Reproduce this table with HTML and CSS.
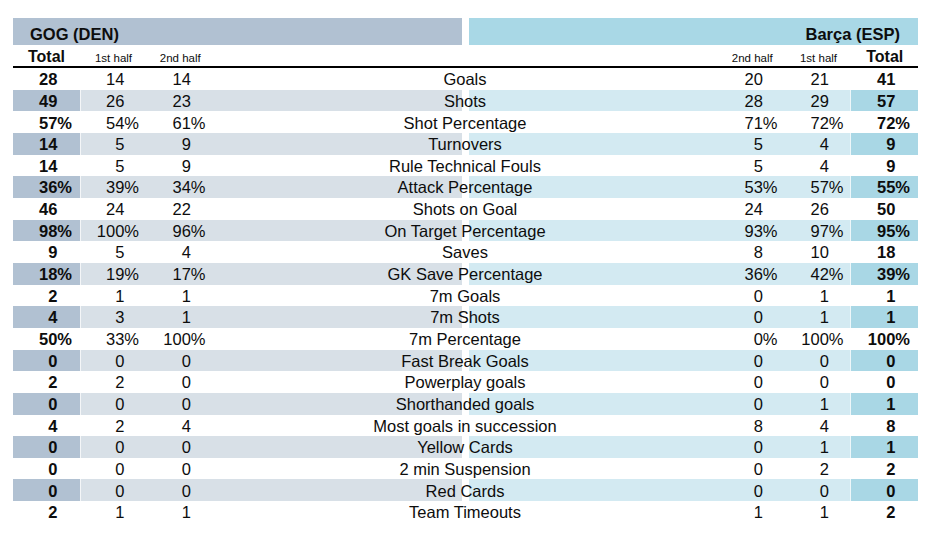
FILE: index.html
```html
<!DOCTYPE html>
<html lang="en">
<head>
<meta charset="utf-8">
<title>GOG vs Barça – Team Statistics</title>
<link rel="stylesheet" href="styles.css">
</head>
<body>
<div class="sheet">
  <div class="teams">
    <div class="team home">GOG (DEN)</div>
    <div class="team away">Barça (ESP)</div>
  </div>
  <div class="subhead">
    <div class="h total">Total</div>
    <div class="h">1st half</div>
    <div class="h">2nd half</div>
    <div class="h blank"></div>
    <div class="h">2nd half</div>
    <div class="h">1st half</div>
    <div class="h total">Total</div>
  </div>
  <div class="stats">
    <div class="row"><div class="c num b">28</div><div class="c num">14</div><div class="c num">14</div><div class="c label">Goals</div><div class="c num">20</div><div class="c num">21</div><div class="c num b">41</div></div>
    <div class="row"><div class="c num b">49</div><div class="c num">26</div><div class="c num">23</div><div class="c label">Shots</div><div class="c num">28</div><div class="c num">29</div><div class="c num b">57</div></div>
    <div class="row"><div class="c num b">57<span class="pct">%</span></div><div class="c num">54<span class="pct">%</span></div><div class="c num">61<span class="pct">%</span></div><div class="c label">Shot Percentage</div><div class="c num">71<span class="pct">%</span></div><div class="c num">72<span class="pct">%</span></div><div class="c num b">72<span class="pct">%</span></div></div>
    <div class="row"><div class="c num b">14</div><div class="c num">5</div><div class="c num">9</div><div class="c label">Turnovers</div><div class="c num">5</div><div class="c num">4</div><div class="c num b">9</div></div>
    <div class="row"><div class="c num b">14</div><div class="c num">5</div><div class="c num">9</div><div class="c label">Rule Technical Fouls</div><div class="c num">5</div><div class="c num">4</div><div class="c num b">9</div></div>
    <div class="row"><div class="c num b">36<span class="pct">%</span></div><div class="c num">39<span class="pct">%</span></div><div class="c num">34<span class="pct">%</span></div><div class="c label">Attack Percentage</div><div class="c num">53<span class="pct">%</span></div><div class="c num">57<span class="pct">%</span></div><div class="c num b">55<span class="pct">%</span></div></div>
    <div class="row"><div class="c num b">46</div><div class="c num">24</div><div class="c num">22</div><div class="c label">Shots on Goal</div><div class="c num">24</div><div class="c num">26</div><div class="c num b">50</div></div>
    <div class="row"><div class="c num b">98<span class="pct">%</span></div><div class="c num">100<span class="pct">%</span></div><div class="c num">96<span class="pct">%</span></div><div class="c label">On Target Percentage</div><div class="c num">93<span class="pct">%</span></div><div class="c num">97<span class="pct">%</span></div><div class="c num b">95<span class="pct">%</span></div></div>
    <div class="row"><div class="c num b">9</div><div class="c num">5</div><div class="c num">4</div><div class="c label">Saves</div><div class="c num">8</div><div class="c num">10</div><div class="c num b">18</div></div>
    <div class="row"><div class="c num b">18<span class="pct">%</span></div><div class="c num">19<span class="pct">%</span></div><div class="c num">17<span class="pct">%</span></div><div class="c label">GK Save Percentage</div><div class="c num">36<span class="pct">%</span></div><div class="c num">42<span class="pct">%</span></div><div class="c num b">39<span class="pct">%</span></div></div>
    <div class="row"><div class="c num b">2</div><div class="c num">1</div><div class="c num">1</div><div class="c label">7m Goals</div><div class="c num">0</div><div class="c num">1</div><div class="c num b">1</div></div>
    <div class="row"><div class="c num b">4</div><div class="c num">3</div><div class="c num">1</div><div class="c label">7m Shots</div><div class="c num">0</div><div class="c num">1</div><div class="c num b">1</div></div>
    <div class="row"><div class="c num b">50<span class="pct">%</span></div><div class="c num">33<span class="pct">%</span></div><div class="c num">100<span class="pct">%</span></div><div class="c label">7m Percentage</div><div class="c num">0<span class="pct">%</span></div><div class="c num">100<span class="pct">%</span></div><div class="c num b">100<span class="pct">%</span></div></div>
    <div class="row"><div class="c num b">0</div><div class="c num">0</div><div class="c num">0</div><div class="c label">Fast Break Goals</div><div class="c num">0</div><div class="c num">0</div><div class="c num b">0</div></div>
    <div class="row"><div class="c num b">2</div><div class="c num">2</div><div class="c num">0</div><div class="c label">Powerplay goals</div><div class="c num">0</div><div class="c num">0</div><div class="c num b">0</div></div>
    <div class="row"><div class="c num b">0</div><div class="c num">0</div><div class="c num">0</div><div class="c label">Shorthanded goals</div><div class="c num">0</div><div class="c num">1</div><div class="c num b">1</div></div>
    <div class="row"><div class="c num b">4</div><div class="c num">2</div><div class="c num">4</div><div class="c label">Most goals in succession</div><div class="c num">8</div><div class="c num">4</div><div class="c num b">8</div></div>
    <div class="row"><div class="c num b">0</div><div class="c num">0</div><div class="c num">0</div><div class="c label">Yellow Cards</div><div class="c num">0</div><div class="c num">1</div><div class="c num b">1</div></div>
    <div class="row"><div class="c num b">0</div><div class="c num">0</div><div class="c num">0</div><div class="c label">2 min Suspension</div><div class="c num">0</div><div class="c num">2</div><div class="c num b">2</div></div>
    <div class="row"><div class="c num b">0</div><div class="c num">0</div><div class="c num">0</div><div class="c label">Red Cards</div><div class="c num">0</div><div class="c num">0</div><div class="c num b">0</div></div>
    <div class="row"><div class="c num b">2</div><div class="c num">1</div><div class="c num">1</div><div class="c label">Team Timeouts</div><div class="c num">1</div><div class="c num">1</div><div class="c num b">2</div></div>
  </div>
</div>
</body>
</html>
```

FILE: styles.css
```css
html, body {
  margin: 0;
  padding: 0;
  background: #ffffff;
}

body {
  font-family: "Liberation Sans", Arial, sans-serif;
  color: #0d0d0d;
}

.sheet {
  width: 905px;
  margin: 18px 0 0 13px;
}

/* team header bars */
.teams {
  display: flex;
  gap: 7px;
  height: 27px;
}

.team {
  flex: 1;
  box-sizing: border-box;
  padding-top: 5px;
  line-height: 22px;
  font-size: 16.5px;
  font-weight: bold;
}

.home {
  background: #b1c1d2;
  padding-left: 17px;
}

.away {
  background: #a9d8e6;
  text-align: right;
  padding-right: 18px;
}

/* column grid shared by sub header and rows */
.subhead,
.row {
  display: grid;
  grid-template-columns: 67px 67px 66.5px 505.5px 66.5px 66px 66.5px;
}

.subhead {
  height: 21px;
  border-bottom: 2px solid #000;
  align-items: end;
}

.h {
  text-align: center;
  font-size: 11.5px;
  line-height: 14px;
  padding-bottom: 1.5px;
}

.h.total {
  font-size: 16px;
  font-weight: bold;
  line-height: 18px;
  padding-bottom: 0;
}

/* stat rows */
.row {
  box-sizing: border-box;
  height: 21.667px;
  padding-top: 1.2px;
  font-size: 16.5px;
  line-height: 20.467px;
}

.row:nth-child(even) {
  background: linear-gradient(to right,
    #b1c1d2 0, #b1c1d2 67px,
    #f4f6f8 67px, #f4f6f8 68px,
    #d8e0e7 68px, #d8e0e7 449px,
    #ffffff 449px, #ffffff 456px,
    #d3eaf2 456px, #d3eaf2 837px,
    #eef7fa 837px, #eef7fa 838px,
    #a9d7e5 838px, #a9d7e5 905px);
}

.c {
  white-space: nowrap;
}

.num {
  text-align: right;
  padding-right: calc(8px + 0.889em);
}

.num.b {
  font-weight: bold;
}

.pct {
  margin-right: -0.889em;
}

.label {
  text-align: center;
  padding-right: 2.5px;
}
```
